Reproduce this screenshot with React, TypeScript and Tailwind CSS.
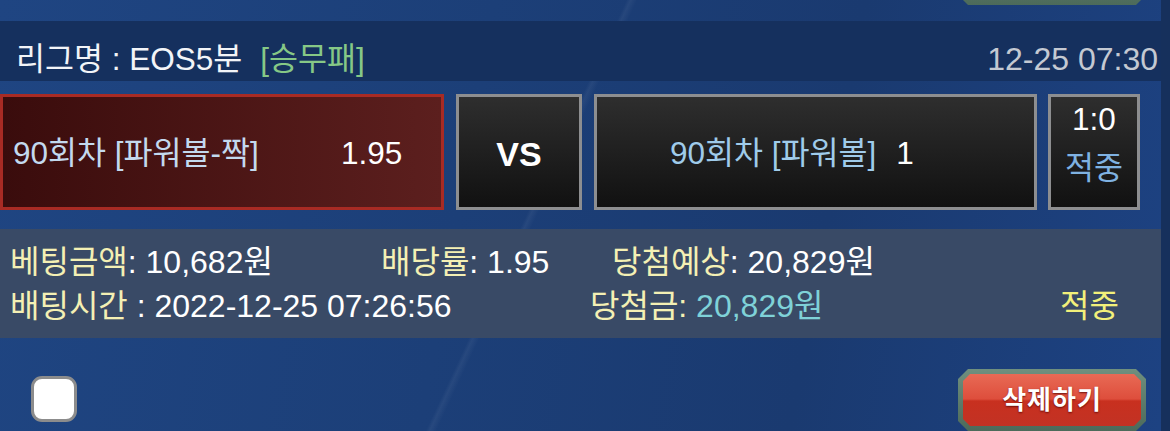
import React from "react";

const FONT = { fontFamily: '"Liberation Sans", "Noto Sans CJK KR", sans-serif' };

function DeleteButton({ label }: { label?: string }) {
  return (
    <div className="relative w-[188px] h-[62px] [clip-path:polygon(10px_0,178px_0,188px_10px,188px_52px,178px_62px,10px_62px,0_52px,0_10px)] bg-[linear-gradient(180deg,#6f8f7e,#4c6a5a)] p-[5px]">
      <div className="w-full h-full [clip-path:polygon(7px_0,171px_0,178px_7px,178px_45px,171px_52px,7px_52px,0_45px,0_7px)] bg-[linear-gradient(180deg,#e86a55_0%,#de4e3c_48%,#c8301f_52%,#c23224_100%)] flex items-center justify-center">
        {label && (
          <span className="text-white text-[26px] font-bold tracking-[1px] [text-shadow:0_1px_2px_rgba(80,0,0,0.8)]">
            {label}
          </span>
        )}
      </div>
    </div>
  );
}

export default function App() {
  return (
    <div
      className="w-[1170px] h-[431px] overflow-hidden flex bg-[#16305c]"
      style={FONT}
    >
      <div className="w-[1161px] h-full flex flex-col bg-[linear-gradient(100deg,#1f4582_0%,#1c3f78_40%,#1a3a70_70%,#1d4282_100%)] relative">
        {/* diagonal streaks */}
        <div className="absolute inset-0 pointer-events-none bg-[linear-gradient(115deg,transparent_0%,transparent_46%,rgba(255,255,255,0.05)_46.3%,transparent_46.8%,transparent_100%)]" />
        {/* top fragment of previous card */}
        <div className="h-[21px] relative overflow-hidden">
          <div className="absolute left-[958px] top-[-57px]">
            <DeleteButton />
          </div>
        </div>
        {/* header */}
        <div className="h-[60px] bg-[#15305e] flex items-center justify-between pl-[16px] pr-[3px] pt-[17px] relative">
          <div className="text-[31.5px] text-[#f2f4f8] flex items-center">
            <span>리그명 : EOS5분</span>
            <span className="ml-[18px] text-[#86c886]">[승무패]</span>
          </div>
          <div className="text-[32px] text-[#c4c9d2]">12-25 07:30</div>
        </div>
        {/* match row */}
        <div className="mt-[13px] h-[118px] flex relative">
          <div className="w-[444px] h-full border-[3px] border-[#a82b24] bg-[linear-gradient(90deg,#3a0c0c,#5c1f1e)] flex items-center pl-[10px] pt-[4px]">
            <span className="text-[31.5px] text-[#c3d9ee] w-[328px]">90회차 [파워볼-짝]</span>
            <span className="text-[31.5px] text-white">1.95</span>
          </div>
          <div className="ml-[12px] w-[126px] h-full border-[3px] border-[#8d8e90] bg-[linear-gradient(180deg,#2e2e2e,#111111)] flex items-center justify-center pt-[4px]">
            <span className="text-[34px] font-bold text-white">VS</span>
          </div>
          <div className="ml-[12px] w-[443px] h-full border-[3px] border-[#8d8e90] bg-[linear-gradient(180deg,#2e2e2e,#111111)] flex items-center pl-[73px] pt-[4px]">
            <span className="text-[31.5px] text-[#9fcbea]">90회차 [파워볼]</span>
            <span className="text-[31.5px] text-white ml-[20px]">1</span>
          </div>
          <div className="ml-[11px] w-[92px] h-full border-[3px] border-[#8d8e90] bg-[linear-gradient(180deg,#2e2e2e,#111111)] flex flex-col items-center pt-[5px] gap-[15px]">
            <span className="text-[31.5px] text-white leading-[34px]">1:0</span>
            <span className="text-[31.5px] text-[#7fb2e2] leading-[34px]">적중</span>
          </div>
        </div>
        {/* info panel */}
        <div className="mt-[19px] h-[110px] bg-[#394a66] flex flex-col justify-center gap-[6px] pl-[10px] relative text-[32px]">
          <div className="flex items-center h-[38px]">
            <span className="w-[371px]">
              <span className="text-[#f4f0b4]">베팅금액</span>
              <span className="text-white">: 10,682원</span>
            </span>
            <span className="w-[231px]">
              <span className="text-[#f4f0b4]">배당률</span>
              <span className="text-white">: 1.95</span>
            </span>
            <span>
              <span className="text-[#f4f0b4]">당첨예상</span>
              <span className="text-white">: 20,829원</span>
            </span>
          </div>
          <div className="flex items-center h-[38px]">
            <span className="w-[580px]">
              <span className="text-[#f4f0b4]">배팅시간</span>
              <span className="text-white"> : 2022-12-25 07:26:56</span>
            </span>
            <span className="w-[470px]">
              <span className="text-[#f4f0b4]">당첨금: </span>
              <span className="text-[#7fd2d8]">20,829원</span>
            </span>
            <span className="text-[#f2f07a]">적중</span>
          </div>
        </div>
        {/* bottom */}
        <div className="flex-1 relative flex">
          <div className="ml-[31px] mt-[38px] w-[46px] h-[46px] rounded-[11px] border-[3px] border-[#8c8c8c] bg-white" />
          <div className="ml-[881px] mt-[31px]">
            <DeleteButton label="삭제하기" />
          </div>
        </div>
      </div>
      <div className="w-[9px] h-full bg-[#16305c]" />
    </div>
  );
}
